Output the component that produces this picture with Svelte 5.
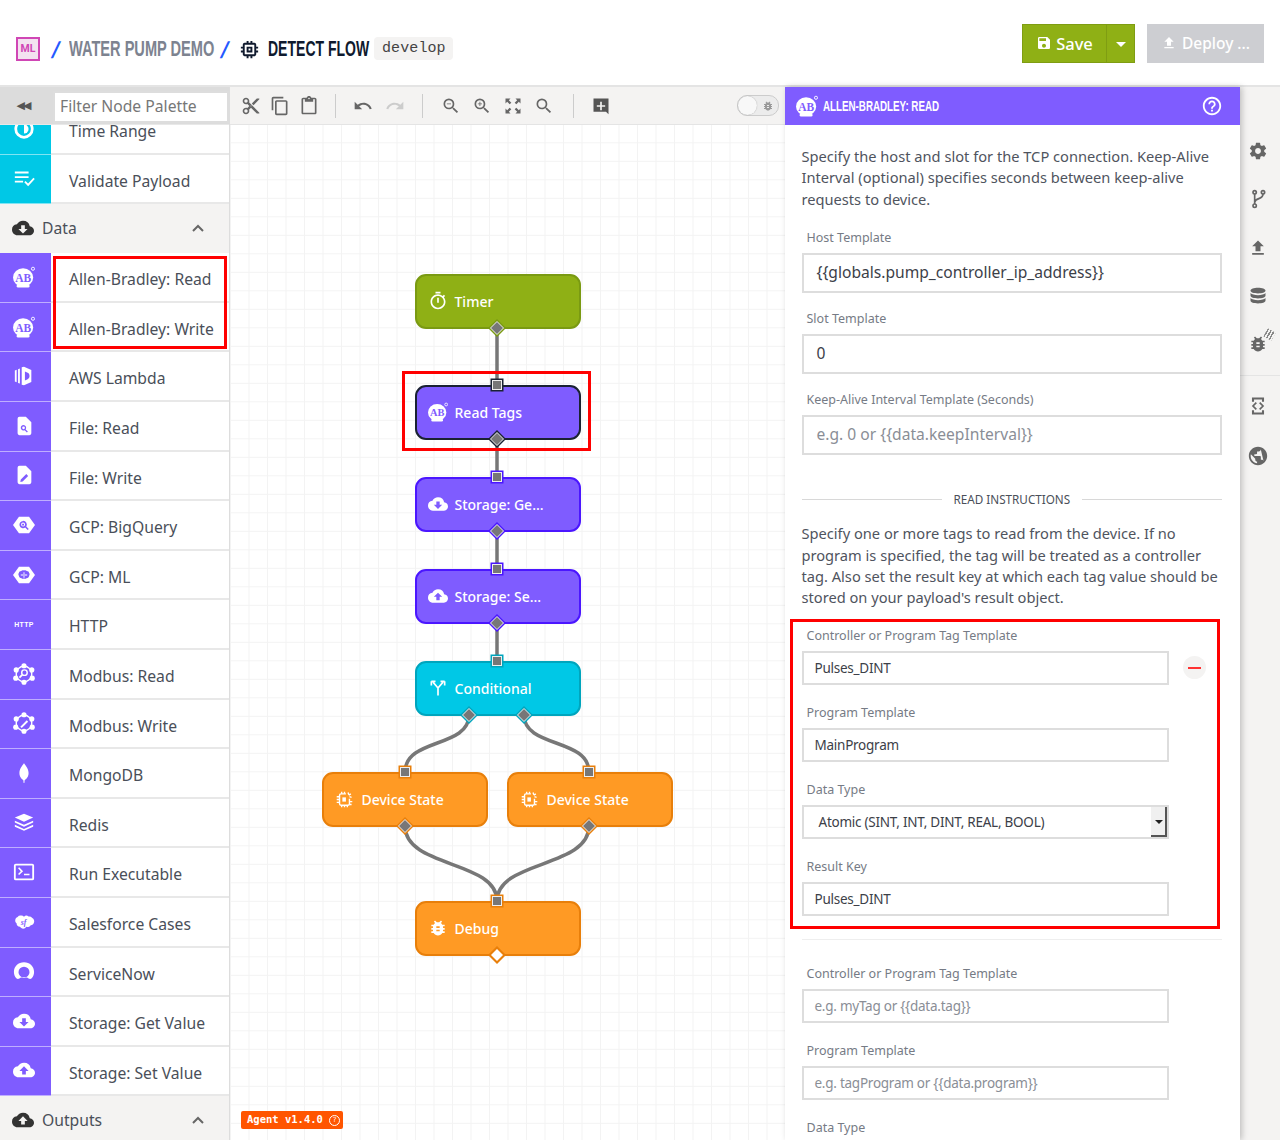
<script>
  const cloud = 'M19.35 10.04A7.49 7.49 0 0 0 12 4C9.11 4 6.6 5.64 5.35 8.04A5.994 5.994 0 0 0 0 14c0 3.31 2.69 6 6 6h13c2.76 0 5-2.24 5-5 0-2.64-2.05-4.78-4.65-4.96z';
  const P = {
    down: cloud + 'M17 13l-5 5-5-5h3V9h4v4h3z',
    up: cloud + 'M14 13v4h-4v-4H7l5-5 5 5h-3z',
    save: 'M17 3H5a2 2 0 0 0-2 2v14a2 2 0 0 0 2 2h14c1.1 0 2-.9 2-2V7l-4-4zm-5 16c-1.66 0-3-1.34-3-3s1.34-3 3-3 3 1.34 3 3-1.34 3-3 3zm3-10H5V5h10v4z',
    cut: 'M9.64 7.64c.23-.5.36-1.05.36-1.64 0-2.21-1.79-4-4-4S2 3.79 2 6s1.79 4 4 4c.59 0 1.14-.13 1.64-.36L10 12l-2.36 2.36C7.14 14.13 6.59 14 6 14c-2.21 0-4 1.79-4 4s1.79 4 4 4 4-1.79 4-4c0-.59-.13-1.14-.36-1.64L12 14l7 7h3v-1L9.64 7.64zM6 8c-1.1 0-2-.89-2-2s.9-2 2-2 2 .89 2 2-.9 2-2 2zm0 12c-1.1 0-2-.89-2-2s.9-2 2-2 2 .89 2 2-.9 2-2 2zm6-7.5c-.28 0-.5-.22-.5-.5s.22-.5.5-.5.5.22.5.5-.22.5-.5.5zM19 3l-6 6 2 2 7-7V3z',
    copy: 'M16 1H4c-1.1 0-2 .9-2 2v14h2V3h12V1zm3 4H8c-1.1 0-2 .9-2 2v14c0 1.1.9 2 2 2h11c1.1 0 2-.9 2-2V7c0-1.1-.9-2-2-2zm0 16H8V7h11v14z',
    paste: 'M19 2h-4.18C14.4.84 13.3 0 12 0c-1.3 0-2.4.84-2.82 2H5c-1.1 0-2 .9-2 2v16c0 1.1.9 2 2 2h14c1.1 0 2-.9 2-2V4c0-1.1-.9-2-2-2zm-7 0c.55 0 1 .45 1 1s-.45 1-1 1-1-.45-1-1 .45-1 1-1zm7 18H5V4h2v3h10V4h2v16z',
    undo: 'M12.5 8c-2.65 0-5.05.99-6.9 2.6L2 7v9h9l-3.62-3.62c1.39-1.16 3.16-1.88 5.12-1.88 3.54 0 6.55 2.31 7.6 5.5l2.37-.78C21.08 11.03 17.15 8 12.5 8z',
    redo: 'M18.4 10.6C16.55 8.99 14.15 8 11.5 8c-4.65 0-8.58 3.03-9.96 7.22L3.9 16c1.05-3.19 4.05-5.5 7.6-5.5 1.95 0 3.73.72 5.12 1.88L13 16h9V7l-3.6 3.6z',
    search: 'M15.5 14h-.79l-.28-.27A6.471 6.471 0 0 0 16 9.5 6.5 6.5 0 1 0 9.5 16c1.61 0 3.09-.59 4.23-1.57l.27.28v.79l5 4.99L20.49 19l-4.99-5zm-6 0C7.01 14 5 11.99 5 9.5S7.01 5 9.5 5 14 7.01 14 9.5 11.99 14 9.5 14z',
    zoomout: 'M15.5 14h-.79l-.28-.27A6.471 6.471 0 0 0 16 9.5 6.5 6.5 0 1 0 9.5 16c1.61 0 3.09-.59 4.23-1.57l.27.28v.79l5 4.99L20.49 19l-4.99-5zm-6 0C7.01 14 5 11.99 5 9.5S7.01 5 9.5 5 14 7.01 14 9.5 11.99 14 9.5 14zM7 9h5v1H7z',
    zoomin: 'M15.5 14h-.79l-.28-.27A6.471 6.471 0 0 0 16 9.5 6.5 6.5 0 1 0 9.5 16c1.61 0 3.09-.59 4.23-1.57l.27.28v.79l5 4.99L20.49 19l-4.99-5zm-6 0C7.01 14 5 11.99 5 9.5S7.01 5 9.5 5 14 7.01 14 9.5 11.99 14 9.5 14zM12 10h-2v2H9v-2H7V9h2V7h1v2h2v1z',
    bug: 'M20 8h-2.81c-.45-.78-1.07-1.45-1.82-1.96L17 4.41 15.59 3l-2.17 2.17C12.96 5.06 12.49 5 12 5c-.49 0-.96.06-1.41.17L8.41 3 7 4.41l1.62 1.63C7.88 6.55 7.26 7.22 6.81 8H4v2h2.09c-.05.33-.09.66-.09 1v1H4v2h2v1c0 .34.04.67.09 1H4v2h2.81c1.04 1.79 2.97 3 5.19 3s4.15-1.21 5.19-3H20v-2h-2.09c.05-.33.09-.66.09-1v-1h2v-2h-2v-1c0-.34-.04-.67-.09-1H20V8zm-6 8h-4v-2h4v2zm0-4h-4v-2h4v2z',
    gear: 'M19.43 12.98c.04-.32.07-.64.07-.98s-.03-.66-.07-.98l2.11-1.65c.19-.15.24-.42.12-.64l-2-3.46c-.12-.22-.39-.3-.61-.22l-2.49 1c-.52-.4-1.08-.73-1.69-.98l-.38-2.65A.488.488 0 0 0 14 2h-4c-.25 0-.46.18-.49.42l-.38 2.65c-.61.25-1.17.59-1.69.98l-2.49-1c-.23-.09-.49 0-.61.22l-2 3.46c-.13.22-.07.49.12.64l2.11 1.65c-.04.32-.07.65-.07.98s.03.66.07.98l-2.11 1.65c-.19.15-.24.42-.12.64l2 3.46c.12.22.39.3.61.22l2.49-1c.52.4 1.08.73 1.69.98l.38 2.65c.03.24.24.42.49.42h4c.25 0 .46-.18.49-.42l.38-2.65c.61-.25 1.17-.59 1.69-.98l2.49 1c.23.09.49 0 .61-.22l2-3.46c.12-.22.07-.49-.12-.64l-2.11-1.65zM12 15.5c-1.93 0-3.5-1.57-3.5-3.5s1.57-3.5 3.5-3.5 3.5 1.57 3.5 3.5-1.57 3.5-3.5 3.5z',
    globe: 'M12 2C6.48 2 2 6.48 2 12s4.48 10 10 10 10-4.48 10-10S17.52 2 12 2zm-1 17.93c-3.95-.49-7-3.85-7-7.93 0-.62.08-1.21.21-1.79L9 15v1c0 1.1.9 2 2 2zM18 17.390c-.26-.81-1-1.39-1.900-1.390h-1v-3c0-.55-.45-1-1-1H8v-2h2c.55 0 1-.45 1-1V7h2c1.100 0 2-.9 2-2v-.41z',
    upload: 'M9 16h6v-6h4l-7-7-7 7h4zm-4 2h14v2H5z',
    timer: 'M9 1h6v2H9zm10.03 6.39l1.42-1.42c-.43-.51-.9-.99-1.41-1.41l-1.42 1.42A8.962 8.962 0 0 0 12 4c-4.97 0-9 4.03-9 9s4.02 9 9 9 9-4.03 9-9c0-2.12-.74-4.07-1.97-5.61zM12 20c-3.87 0-7-3.13-7-7s3.13-7 7-7 7 3.13 7 7-3.13 7-7 7zM11 8h2v6h-2z',
    chip: 'M15 9H9v6h6V9zm-2 4h-2v-2h2v2zm8-2V9h-2V7c0-1.1-.9-2-2-2h-2V3h-2v2h-2V3H9v2H7c-1.1 0-2 .9-2 2v2H3v2h2v2H3v2h2v2c0 1.1.9 2 2 2h2v2h2v-2h2v2h2v-2h2c1.1 0 2-.9 2-2v-2h2v-2h-2v-2h2zm-4 6H7V7h10v10z',
    help: 'M11 18h2v-2h-2v2zm1-16C6.48 2 2 6.48 2 12s4.48 10 10 10 10-4.48 10-10S17.52 2 12 2zm0 18c-4.41 0-8-3.59-8-8s3.59-8 8-8 8 3.59 8 8-3.59 8-8 8zm0-14c-2.21 0-4 1.79-4 4h2c0-1.1.9-2 2-2s2 .9 2 2c0 2-3 1.75-3 5h2c0-2.25 3-2.5 3-5 0-2.21-1.79-4-4-4z',
    comment: 'M3 3h18v19l-3-3H3zM11 7v4H7v2h4v4h2v-4h4v-2h-4V7z',
    lambda: 'M2 6l2-.8v13.6L2 18zM5.500 4.500l2-.8v16.600l-2-.8zM9.500 2.500L12 2l8 3.500v13L12 22l-2.500-.5zM13 7v10l3-1.500c1.500-.8 2-2 2-3.500s-.5-2.700-2-3.500z',
    fileread: 'M7 2h7l6 6v12a2 2 0 0 1-2 2H7a2 2 0 0 1-2-2V4a2 2 0 0 1 2-2zM11.500 11a3 3 0 1 0 1.300 5.700l2.400 2.400 1-1-2.400-2.400A3 3 0 0 0 11.500 11zm0 1.500a1.500 1.500 0 1 1 0 3 1.500 1.500 0 0 1 0-3z',
    filewrite: 'M7 2h7l6 6v12a2 2 0 0 1-2 2H7a2 2 0 0 1-2-2V4a2 2 0 0 1 2-2zM14.500 11l-6 6-.5 2.500 2.500-.5 6-6z',
    hexq: 'M6.500 3h11L24 12l-6.500 9h-11L0 12zM11 7.500a4 4 0 1 0 2.300 7.300l2.700 2.700 1.200-1.200-2.700-2.700A4 4 0 0 0 11 7.500zm0 1.800a2.200 2.200 0 1 1 0 4.400 2.200 2.200 0 0 1 0-4.400zM10 10.500h2v2h-2z',
    hexm: 'M6.500 3h11L24 12l-6.500 9h-11L0 12zM9 7.500c-1.500 0-2.500 1-2.500 2-.8.8-.8 2.600 0 3.400 0 1.600 1.200 2.600 2.800 2.600.8.8 2.200.8 2.700.2.500.6 1.900.6 2.700-.2 1.600 0 2.800-1 2.800-2.600.8-.8.8-2.600 0-3.400 0-1-1-2-2.500-2-.8-1-2.300-1-3-.4-.7-.6-2.200-.6-3 .4zM11.500 9v6h1V9zM8.500 11.500v1h7v-1z',
    redis: 'M12 2l10 4-10 4.500L2 6zM2 9.500l10 4.500 10-4.500V11.500L12 16 2 11.500zM2 14l10 4.500L22 14v2l-10 4.500L2 16z',
    term: 'M3 3h18a2 2 0 0 1 2 2v14a2 2 0 0 1-2 2H3a2 2 0 0 1-2-2V5a2 2 0 0 1 2-2zm0 2v14h18V5zM5.500 8l1.200-1.200L11 11.200l-4.300 4.200L5.500 14.200l3-3zM12 14h6v1.600h-6z',
    sn: 'M12 2.500C5.800 2.500 1 7 1 13c0 2.600 1 5 2.600 6.900.9 1 2.300 1.100 3.400.3 1.400-1 3-1.600 5-1.600s3.600.6 5 1.600c1.100.8 2.500.7 3.400-.3C22 18 23 15.600 23 13c0-6-4.800-10.500-11-10.500zm0 4.800a6 6 0 1 1 0 12 6 6 0 0 1 0-12z',
    mongo: 'M12 1c.5 2 5 5 5 11 0 4.500-3 7-4.300 7.800L12.400 23h-.8l-.3-3.200C10 19 7 16.500 7 12c0-6 4.500-9 5-11z',
    cloudsf: 'M9 5a4 4 0 0 1 3 1.300A3.500 3.500 0 0 1 17 6a4.500 4.500 0 0 1 4 1.500 4.500 4.500 0 0 1-2 8.300 3.500 3.500 0 0 1-4.500 1.300 4 4 0 0 1-7 .2A3.500 3.500 0 0 1 4 13.500a4 4 0 0 1 1-7A4 4 0 0 1 9 5z',
    db: 'M12 2c5 0 9 1.300 9 3.500S17 9 12 9 3 7.700 3 5.500 7 2 12 2zM3 8.500C4.500 10.200 8 11 12 11s7.500-.8 9-2.500v3C21 13.700 17 15 12 15s-9-1.300-9-3.500zM3 14.500C4.500 16.200 8 17 12 17s7.500-.8 9-2.500v3C21 19.700 17 21 12 21s-9-1.300-9-3.500z',
  };

  const palette = [
    ['Time Range', 'cyan', 'time'],
    ['Validate Payload', 'cyan', 'validate'],
    ['h', 'Data', 'down'],
    ['Allen-Bradley: Read', 'purple', 'ab'],
    ['Allen-Bradley: Write', 'purple', 'ab'],
    ['AWS Lambda', 'purple', 'lambda'],
    ['File: Read', 'purple', 'fileread'],
    ['File: Write', 'purple', 'filewrite'],
    ['GCP: BigQuery', 'purple', 'hexq'],
    ['GCP: ML', 'purple', 'hexm'],
    ['HTTP', 'purple', 'http'],
    ['Modbus: Read', 'purple', 'modbusr'],
    ['Modbus: Write', 'purple', 'modbusw'],
    ['MongoDB', 'purple', 'mongo'],
    ['Redis', 'purple', 'redis'],
    ['Run Executable', 'purple', 'term'],
    ['Salesforce Cases', 'purple', 'salesforce'],
    ['ServiceNow', 'purple', 'sn'],
    ['Storage: Get Value', 'purple', 'down'],
    ['Storage: Set Value', 'purple', 'up'],
    ['h', 'Outputs', 'up'],
  ];

  const nodes = [
    { label: 'Timer', x: 415, y: 274, c: 'green', icon: 'timer' },
    { label: 'Read Tags', x: 415, y: 385, c: 'purple sel', icon: 'ab' },
    { label: 'Storage: Ge...', x: 415, y: 477, c: 'purple', icon: 'down' },
    { label: 'Storage: Se...', x: 415, y: 569, c: 'purple', icon: 'up' },
    { label: 'Conditional', x: 415, y: 661, c: 'cyan', icon: 'cond' },
    { label: 'Device State', x: 322, y: 772, c: 'orange', icon: 'device' },
    { label: 'Device State', x: 507, y: 772, c: 'orange', icon: 'device' },
    { label: 'Debug', x: 415, y: 901, c: 'orange', icon: 'bug' },
  ];

  const wires = [
    'M497 328V385', 'M497 439V477', 'M497 531V569', 'M497 623V661',
    'M469 715C469 748 405 738 405 772', 'M524 715C524 748 589 738 589 772',
    'M405 826C405 868 497 860 497 901', 'M589 826C589 868 497 860 497 901',
  ];
  const inPorts = [[497, 385, '#1a2233'], [497, 477, '#4b16ff'], [497, 569, '#4b16ff'], [497, 661, '#00a5bd'], [405, 772, '#e87f0a'], [589, 772, '#e87f0a'], [497, 901, '#e87f0a']];
  const outPorts = [[497, 328, '#7a9a12'], [497, 439, '#1a2233'], [497, 531, '#4b16ff'], [497, 623, '#4b16ff'], [469, 715, '#00a5bd'], [524, 715, '#00a5bd'], [405, 826, '#e87f0a'], [589, 826, '#e87f0a']];
  const diamond = (x, y, r) => `${x},${y - r} ${x + r},${y} ${x},${y + r} ${x - r},${y}`;
  const railA = ['gear', 'branch', 'upload', 'db', 'bugx'];
</script>

{#snippet sats()}
  <g fill="none" stroke="currentColor" stroke-width="1.500"><circle cx="12" cy="12" r="8.500" /></g>
  <circle cx="12" cy="3" r="2.800" /><circle cx="20.500" cy="7.500" r="2.800" /><circle cx="21" cy="16.500" r="2.800" /><circle cx="12" cy="21" r="2.800" /><circle cx="3" cy="16.500" r="2.800" /><circle cx="3.500" cy="7.500" r="2.800" />
{/snippet}

{#snippet icon(name, size = 22)}
  <svg class="ic" width={size} height={size} viewBox="0 0 24 24" fill="currentColor" fill-rule="evenodd" aria-hidden="true">
    {#if P[name]}
      <path d={P[name]} />
    {:else if name === 'ab'}
      <ellipse cx="11" cy="12.500" rx="11" ry="10" />
      <rect x="4" y="20" width="14" height="3.500" rx="1.500" />
      <text x="11" y="17" text-anchor="middle" class="abtext">AB</text>
      <circle cx="21.800" cy="3" r="1.700" fill="none" stroke="currentColor" stroke-width="1" />
    {:else if name === 'time'}
      <circle cx="12" cy="12" r="9" fill="none" stroke="currentColor" stroke-width="3" />
      <path d="M12 7a5 5 0 0 1 0 10z" />
    {:else if name === 'validate'}
      <path d="M2 5h15v2H2zM2 10h15v2H2zM2 15h9v2H2z" />
      <path d="M13 16l3.500 3.500L23 12.500" fill="none" stroke="currentColor" stroke-width="2" />
    {:else if name === 'http'}
      <text x="12" y="15.500" text-anchor="middle" class="httptext">HTTP</text>
    {:else if name === 'modbusr'}
      {@render sats()}
      <circle cx="12.500" cy="10.500" r="3" fill="none" stroke="currentColor" stroke-width="1.600" /><path d="M10 13l-3 3" fill="none" stroke="currentColor" stroke-width="2" />
    {:else if name === 'modbusw'}
      {@render sats()}
      <path d="M8 16l7-7 1.500 1.500-7 7z" />
    {:else if name === 'salesforce'}
      <path d={P.cloudsf} />
      <text x="11.500" y="15" text-anchor="middle" class="sftext">sf</text>
    {:else if name === 'cond'}
      <path d="M12 21V12L6 5M12 12l6-7M4 4h5M4 4v5M20 4h-5M20 4v5" fill="none" stroke="currentColor" stroke-width="2" />
    {:else if name === 'device'}
      <path d="M14 4H7a2 2 0 0 0-2 2v12a2 2 0 0 0 2 2h10a2 2 0 0 0 2-2v-7" fill="none" stroke="currentColor" stroke-width="2" />
      <path d="M8 1v3M12 1v3M8 20v3M12 20v3M16 20v3M1 8h4M1 12h4M1 16h4M19 15h4M19 19h3M17 2l1 3M21 4l-3 2M22 9l-3-1" fill="none" stroke="currentColor" stroke-width="2" />
      <path d="M9 9h5v6H9z" />
    {:else if name === 'branch'}
      <g fill="none" stroke="currentColor" stroke-width="2"><circle cx="8" cy="4" r="2" /><circle cx="8" cy="20" r="2" /><circle cx="18" cy="4" r="2" /><path d="M8 6v12M8 16c1-6 10-3 10-10" /></g>
    {:else if name === 'bugx'}
      <path d={P.bug} />
    {:else if name === 'code'}
      <path d="M6 7V3h12v4M6 17v4h12v-4" fill="none" stroke="currentColor" stroke-width="2.500" /><path d="M10 8l-4 4 4 4M14 8l4 4-4 4" fill="none" stroke="currentColor" stroke-width="2" />
    {:else if name === 'expand'}
      <path d="M3 3h6L7 5l3 3-2 2-3-3-2 2zM21 3v6l-2-2-3 3-2-2 3-3-2-2zM3 21v-6l2 2 3-3 2 2-3 3 2 2zM21 21h-6l2-2-3-3 2-2 3 3 2-2z" />
    {/if}
  </svg>
{/snippet}

<div class="app">
  <header class="top">
    <div class="crumbs">
      <span class="ml">ML</span>
      <span class="slash first">/</span>
      <span class="proj"><span class="squeeze">WATER PUMP DEMO</span></span>
      <span class="slash second">/</span>
      <span class="chip">{@render icon('chip', 23)}</span>
      <span class="flow"><span class="squeeze">DETECT FLOW</span></span>
      <span class="branch">develop</span>
    </div>
    <div class="actions">
      <div class="save">
        <span class="save-main">{@render icon('save', 16)}Save</span>
        <span class="save-caret"></span>
      </div>
      <div class="deploy">{@render icon('upload', 16)}Deploy ...</div>
    </div>
  </header>

  <div class="body">
    <aside class="palette">
      <div class="filter">
        <span class="collapse">◀◀</span>
        <div class="filter-input">Filter Node Palette</div>
      </div>
      <div class="list">
        <div class="scroll">
          {#each palette as row}
            {#if row[0] === 'h'}
              <div class="group">
                <span class="group-ic">{@render icon(row[2], 22)}</span>
                <span class="group-name">{row[1]}</span>
                <svg class="chev" width="12" height="8" viewBox="0 0 12 8"><path d="M1 7l5-5 5 5" fill="none" stroke="#666" stroke-width="2" /></svg>
              </div>
            {:else}
              <div class="item">
                <span class="cell {row[1]}">{@render icon(row[2], 22)}</span>
                <span class="name">{row[0]}</span>
              </div>
            {/if}
          {/each}
        </div>
        <div class="redbox rb-palette"></div>
      </div>
    </aside>

    <main class="editor">
      <div class="toolbar">
        <div class="tools t1">{@render icon('cut', 20)}{@render icon('copy', 20)}{@render icon('paste', 20)}</div>
        <span class="sep"></span>
        <div class="tools t2">{@render icon('undo', 20)}<span class="dim">{@render icon('redo', 20)}</span></div>
        <span class="sep"></span>
        <div class="tools t3">{@render icon('zoomout', 20)}{@render icon('zoomin', 20)}{@render icon('expand', 20)}{@render icon('search', 20)}</div>
        <span class="sep"></span>
        <div class="tools t4">{@render icon('comment', 20)}</div>
        <div class="toggle"><span class="knob"></span><span class="tbug">{@render icon('bug', 12)}</span></div>
      </div>
      <div class="canvas">
        {#each nodes as n}
          <div class="node {n.c}" style="left:{n.x - 230}px;top:{n.y - 125}px">
            <span class="node-ic">{@render icon(n.icon, n.icon === 'device' ? 17 : 20)}</span>
            <span class="node-label">{n.label}</span>
          </div>
        {/each}
        <svg class="wires" viewBox="230 125 555 1015" aria-hidden="true">
          {#each wires as d}<path {d} fill="none" stroke="#777" stroke-width="3.500" />{/each}
          {#each inPorts as [x, y, c]}
            <rect x={x - 6.500} y={y - 6.500} width="13" height="13" fill={c} />
            <rect x={x - 4.500} y={y - 4.500} width="9" height="9" fill="#777" stroke="#eee" stroke-width="1" />
          {/each}
          {#each outPorts as [x, y, c]}
            <polygon points={diamond(x, y, 9)} fill={c} />
            <polygon points={diamond(x, y, 6.500)} fill="#777" stroke="#eee" stroke-width="1" />
          {/each}
          <polygon points={diamond(497, 955, 9)} fill="#e87f0a" />
          <polygon points={diamond(497, 955, 6)} fill="#fff" />
        </svg>
        <div class="redbox rb-node"></div>
        <div class="agent">Agent v1.4.0 <span class="agent-q">?</span></div>
      </div>
    </main>

    <section class="panel">
      <div class="panel-head">
        <span class="ph-ic">{@render icon('ab', 22)}</span>
        <span class="ph-title"><span class="squeeze">ALLEN-BRADLEY: READ</span></span>
        <span class="ph-help">{@render icon('help', 22)}</span>
      </div>
      <div class="form">
        <p class="desc">Specify the host and slot for the TCP connection. Keep-Alive Interval (optional) specifies seconds between keep-alive requests to device.</p>
        <div class="field big"><div class="lab">Host Template</div><div class="inp">{'{{globals.pump_controller_ip_address}}'}</div></div>
        <div class="field big"><div class="lab">Slot Template</div><div class="inp">0</div></div>
        <div class="field big"><div class="lab">Keep-Alive Interval Template (Seconds)</div><div class="inp ph">{'e.g. 0 or {{data.keepInterval}}'}</div></div>
        <div class="section-title"><span>READ INSTRUCTIONS</span></div>
        <p class="desc second">Specify one or more tags to read from the device. If no program is specified, the tag will be treated as a controller tag. Also set the result key at which each tag value should be stored on your payload's result object.</p>
        <div class="group-a">
          <div class="redbox rb-form"></div>
          <div class="small-field first"><div class="lab">Controller or Program Tag Template</div><div class="inp">Pulses_DINT</div><span class="minus"></span></div>
          <div class="small-field"><div class="lab">Program Template</div><div class="inp">MainProgram</div></div>
          <div class="small-field"><div class="lab">Data Type</div><div class="inp sel">Atomic (SINT, INT, DINT, REAL, BOOL)<span class="sel-btn"></span></div></div>
          <div class="small-field"><div class="lab">Result Key</div><div class="inp">Pulses_DINT</div></div>
        </div>
        <div class="rule"></div>
        <div class="small-field second-set"><div class="lab">Controller or Program Tag Template</div><div class="inp ph">{'e.g. myTag or {{data.tag}}'}</div></div>
        <div class="small-field"><div class="lab">Program Template</div><div class="inp ph">{'e.g. tagProgram or {{data.program}}'}</div></div>
        <div class="small-field"><div class="lab">Data Type</div></div>
      </div>
    </section>

    <nav class="rail">
      <div class="rail-top">
        {#each railA as r}<span class="rail-ic">{@render icon(r, 20)}</span>{/each}
        <span class="plug"></span>
      </div>
      <div class="rail-bottom">
        <span class="rail-ic">{@render icon('code', 20)}</span>
        <span class="rail-ic">{@render icon('globe', 22)}</span>
      </div>
    </nav>
  </div>
</div>

<style>
  :global(body) { margin: 0; background: #fff; }
  .app { width: 1280px; height: 1140px; overflow: hidden; display: flex; flex-direction: column; font-family: "Noto Sans", "Open Sans", sans-serif; color: #4a4f59; }
  .ic { display: block; flex: none; }
  .abtext { font: 700 12.500px "Liberation Serif", serif; fill: #7f5cff; }
  .httptext { font: 700 7.500px "Liberation Sans", sans-serif; fill: currentColor; letter-spacing: .4px; }
  .sftext { font: italic 700 8.500px "Liberation Serif", serif; fill: #7f5cff; }
  .squeeze { display: inline-block; transform-origin: left center; white-space: nowrap; }

  .top { height: 85px; flex: none; display: flex; justify-content: space-between; align-items: flex-start; border-bottom: 2px solid #e4e4e4; box-sizing: content-box; }
  .crumbs { display: flex; align-items: center; height: 24px; margin: 37px 0 0 16px; }
  .ml { width: 20px; height: 20px; border: 2px solid #d046b5; background: #f3e2f0; color: #d046b5; font: 700 10.500px/20px "Roboto", sans-serif; text-align: center; }
  .slash { color: #2459ff; font: 700 22px "Roboto", sans-serif; transform: skewX(-8deg); }
  .slash.first { margin: 0 9px 0 12px; }
  .slash.second { margin: 0 9px 0 7px; }
  .proj, .flow { font: 700 22px/24px "Liberation Sans", sans-serif; white-space: nowrap; }
  .proj { color: #7d8390; width: 145px; }
  .proj .squeeze { transform: scaleX(.663); }
  .chip { color: #101a2e; margin: 0 7px 0 0; }
  .flow { color: #0f1a2e; width: 101px; }
  .flow .squeeze { transform: scaleX(.637); }
  .branch { margin-left: 5px; height: 23px; width: 79px; text-align: center; border-radius: 4px; background: #f4f3f2; color: #444; font: 15px/23px "Liberation Mono", monospace; letter-spacing: .1px; margin-top: -2px; }
  .actions { display: flex; gap: 12px; margin: 24px 16px 0 0; }
  .save { display: flex; width: 113px; height: 39px; box-sizing: border-box; background: #8fb015; border: 1px solid #7f9d12; color: #fff; }
  .save-main { width: 84px; padding-bottom: 1px; box-sizing: border-box; display: flex; align-items: center; justify-content: center; gap: 4px; font: 500 16.500px "Noto Sans", sans-serif; border-right: 1px solid #7f9d12; }
  .save-caret { flex: 1; position: relative; }
  .save-caret::after { content: ""; position: absolute; left: 9px; top: 17px; border: 5px solid transparent; border-top-color: #fff; border-bottom: 0; }
  .deploy { width: 117px; height: 39px; padding-bottom: 1px; box-sizing: border-box; background: #cdced2; color: #fff; display: flex; align-items: center; justify-content: center; gap: 5px; font: 500 15.500px "Noto Sans", sans-serif; }

  .body { flex: 1; min-height: 0; display: flex; }

  .palette { width: 230px; flex: none; display: flex; flex-direction: column; box-sizing: border-box; border-right: 1px solid #ddd; }
  .filter { height: 38px; flex: none; box-sizing: border-box; display: flex; background: #dcdcdc; border-bottom: 1px solid #e8e8e8; }
  .collapse { width: 46px; padding-right: 7px; flex: none; text-align: center; font: 11px/38px "DejaVu Sans", sans-serif; letter-spacing: -2px; color: #555; }
  .filter-input { flex: 1; box-sizing: border-box; background: #fff; margin: 4px 0 1px 0; border: 2px solid #ddd; padding-left: 5px; font-size: 15.700px; line-height: 27px; color: #777; overflow: hidden; white-space: nowrap; }
  .list { flex: 1; min-height: 0; overflow: hidden; position: relative; }
  .scroll { margin-top: -20px; }
  .item { height: 49.600px; display: flex; box-sizing: border-box; border-bottom: 2.500px solid #e8e8e8; }
  .cell { width: 51px; flex: none; display: flex; align-items: center; justify-content: center; color: #fff; height: 49.600px; box-sizing: border-box; padding: 0 4px 1px 0; border-bottom: 1px solid rgba(255, 255, 255, .5); }
  .cell.cyan { background: #00c8e6; }
  .cell.purple { background: #7f5cff; }
  .name { padding-left: 18px; font-size: 15.700px; line-height: 52px; white-space: nowrap; }
  .group { height: 49px; display: flex; align-items: center; background: #f4f3f2; padding: 0 0 2px 12px; color: #333; box-sizing: border-box; position: relative; }
  .group-ic { color: #333; }
  .group-name { margin-left: 8px; font-size: 15.700px; color: #4a4f59; flex: 1; }
  .chev { margin-right: 25px; }
  .rb-palette { left: 53px; top: 131px; width: 174px; height: 93px; }

  .editor { flex: none; width: 555px; display: flex; flex-direction: column; position: relative; }
  .toolbar { height: 38px; flex: none; box-sizing: border-box; display: flex; align-items: center; background: #f4f3f2; border-bottom: 1px solid #e4e4e4; color: #666; padding-left: 11px; }
  .tools { display: flex; }
  .t1 { gap: 9px; }
  .t2 { gap: 12px; }
  .t3 { gap: 11px; }
  .dim { color: #ccc; }
  .sep { width: 1px; height: 24px; background: #ccc; }
  .t1 + .sep { margin: 0 17px 0 16px; }
  .t2 + .sep { margin: 0 18px 0 17px; }
  .t3 + .sep { margin: 0 17px 0 19px; }
  .t4 { color: #555; }
  .toggle { margin-left: 126px; width: 40px; height: 19px; border-radius: 10px; background: #ececec; border: 1px solid #ccc; position: relative; }
  .knob { position: absolute; left: 0; top: 0; width: 19px; height: 19px; border-radius: 50%; background: #f8f8f8; box-shadow: 0 0 1px #999; }
  .tbug { position: absolute; right: 4px; top: 4px; color: #999; }
  .canvas { flex: 1; position: relative; overflow: hidden; background-color: #fff; background-image: linear-gradient(#f3f3f3 1px, transparent 1px), linear-gradient(90deg, #f3f3f3 1px, transparent 1px); background-size: 18.500px 18.500px; background-position: 0 -1.200px; }
  .node { position: absolute; width: 165.500px; height: 55px; box-sizing: border-box; border-radius: 11px; border: 2.500px solid; padding-bottom: 1px; display: flex; align-items: center; color: #fff; }
  .node.green { background: #8fb015; border-color: #7a9a12; }
  .node.purple { background: #7f5cff; border-color: #4b16ff; }
  .node.sel { border-color: #1a2233; }
  .node.cyan { background: #00c8e6; border-color: #00a5bd; }
  .node.orange { background: #ff9a24; border-color: #e87f0a; }
  .node-ic { margin-left: 8.500px; width: 24px; display: flex; justify-content: center; }
  .node-label { margin-left: 5px; font-size: 14px; font-weight: 500; white-space: nowrap; }
  .wires { position: absolute; left: 0; top: 0; width: 555px; height: 1015px; pointer-events: none; }
  .redbox { position: absolute; border: 3px solid #f00; box-sizing: border-box; pointer-events: none; z-index: 5; }
  .rb-node { left: 172px; top: 246px; width: 189px; height: 80px; }
  .agent { position: absolute; left: 11px; top: 986px; height: 18px; width: 102px; box-sizing: border-box; padding-left: 6px; border-radius: 2px; background: #ff5500; color: #fff; font: 700 10.500px/17px "DejaVu Sans Mono", monospace; white-space: nowrap; }
  .agent-q { display: inline-block; width: 9px; height: 9px; line-height: 9px; font-size: 7px; text-align: center; border: 1px solid #fff; border-radius: 50%; vertical-align: 1px; font-weight: 400; }

  .panel { width: 455px; flex: none; box-shadow: 2px 0 6px rgba(0, 0, 0, .22); position: relative; z-index: 2; background: #fff; display: flex; flex-direction: column; }
  .panel-head { height: 38px; flex: none; background: #7f5cff; color: #fff; display: flex; align-items: center; padding: 0 0 2px 11px; box-sizing: border-box; }
  .ph-ic { width: 22px; margin-top: 2px; }
  .ph-title { margin-left: 5px; font: 700 15px "Liberation Sans", sans-serif; flex: 1; white-space: nowrap; }
  .ph-title .squeeze { transform: scaleX(.652); }
  .ph-help { margin: 2px 17px 0 0; }
  .form { padding: 21px 18px 0 16.500px; position: relative; }
  .desc { margin: 0; font-size: 14.650px; line-height: 21.400px; color: #4f545e; }
  .lab { font-size: 12.500px; line-height: 16px; color: #767b85; padding-left: 5px; white-space: nowrap; }
  .field.big { margin-top: 20px; }
  .field.big + .field.big { margin-top: 18.500px; }
  .field.big .lab { height: 23px; }
  .field.big .inp { height: 39.500px; font-size: 15.600px; line-height: 35px; padding-left: 13px; }
  .inp { box-sizing: border-box; border: 2px solid #ddd; color: #3c4048; background: #fff; white-space: nowrap; }
  .inp.ph { color: #8a8e96; }
  .section-title { margin-top: 35.500px; display: flex; align-items: center; gap: 12px; font-size: 11.700px; line-height: 18px; color: #4a4f59; }
  .section-title::before, .section-title::after { content: ""; height: 1px; background: #d8d8d8; }
  .section-title::before { width: 140px; }
  .section-title::after { flex: 1; }
  .section-title span { white-space: nowrap; }
  .desc.second { margin-top: 15px; }
  .group-a { position: relative; }
  .rb-form { left: -12px; top: -9px; width: 430px; height: 310px; }
  .small-field { position: relative; width: 367.500px; margin-top: 19px; }
  .small-field .lab { height: 23px; line-height: 16px; }
  .small-field + .small-field { margin-top: 19.500px; }
  .small-field .inp { height: 34.500px; font-size: 13.500px; letter-spacing: -.25px; line-height: 30px; padding-left: 11px; }
  .small-field .inp.sel { padding-left: 15px; position: relative; }
  .sel-btn { position: absolute; right: 0; top: 0; width: 16px; height: 30px; background: #f0f0f0; border-right: 2px solid #555; border-bottom: 2px solid #555; box-sizing: border-box; }
  .sel-btn::after { content: ""; position: absolute; left: 4px; top: 13px; border: 4px solid transparent; border-top-color: #222; border-bottom: 0; }
  .minus { position: absolute; left: 381.500px; top: 28.500px; width: 23px; height: 23px; border-radius: 50%; background: #f4f3f2; }
  .minus::after { content: ""; position: absolute; left: 5px; top: 10.500px; width: 13px; height: 2px; background: #f33; }
  .rule { height: 1px; background: #eee; margin-top: 22.500px; }
  .small-field.second-set { margin-top: 26px; }

  .rail { flex: 1; background: #f4f3f2; color: #666; position: relative; display: flex; flex-direction: column; align-items: center; }
  .rail-top { box-sizing: border-box; padding: 54px 4px 21px 0; display: flex; flex-direction: column; gap: 28.300px; align-items: center; width: 100%; border-bottom: 1px solid #e4e4e4; position: relative; }
  .rail-ic { display: block; height: 20px; }
  .rail-bottom { padding: 20px 4px 0 0; box-sizing: border-box; width: 100%; display: flex; flex-direction: column; gap: 29px; align-items: center; }
  .plug { position: absolute; left: 25px; top: 243px; width: 9px; height: 9px; background: repeating-linear-gradient(90deg, #888 0 1.500px, transparent 1.500px 3px); transform: rotate(30deg); }
</style>
